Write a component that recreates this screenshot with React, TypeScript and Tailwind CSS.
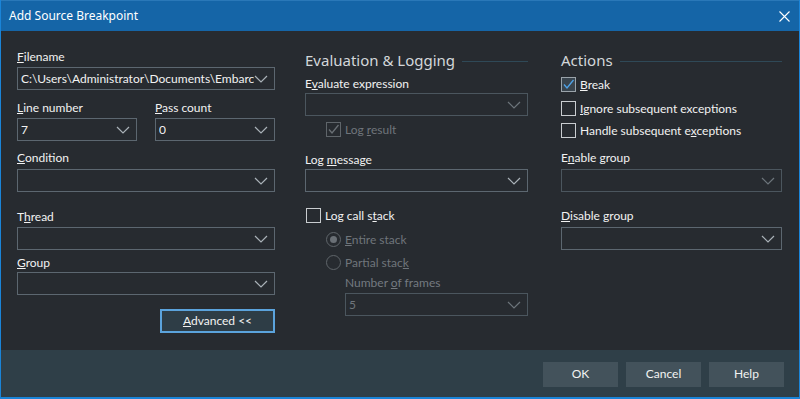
import type { ReactNode } from "react";

const font = "font-['Lato','Noto_Sans',sans-serif]";

const Chevron = ({ dim }: { dim?: boolean }) => (
  <svg width="14" height="8" viewBox="0 0 14 8" className="shrink-0">
    <path
      d="M1 1 L7 7 L13 1"
      fill="none"
      stroke={dim ? "#6d757b" : "#aab2b8"}
      strokeWidth="1.2"
    />
  </svg>
);

const Combo = ({
  value,
  disabled,
  className = "",
}: {
  value?: string;
  disabled?: boolean;
  className?: string;
}) => (
  <div
    className={`h-[23px] flex items-center justify-between pl-[3px] pr-[6px] border ${
      disabled ? "border-[#4b565e] text-[#6f767c]" : "border-[#5c6770] text-[#f2f2f2]"
    } ${className}`}
  >
    <span className="whitespace-nowrap overflow-hidden">{value}</span>
    <Chevron dim={disabled} />
  </div>
);

const Label = ({
  children,
  className = "",
  dim,
}: {
  children: ReactNode;
  className?: string;
  dim?: boolean;
}) => (
  <div
    className={`h-[16px] leading-[16px] whitespace-nowrap ${
      dim ? "text-[#747a80]" : "text-[#f2f2f2]"
    } ${className}`}
  >
    {children}
  </div>
);

const Check = ({
  checked,
  disabled,
  children,
  className = "",
}: {
  checked?: boolean;
  disabled?: boolean;
  children: ReactNode;
  className?: string;
}) => (
  <div className={`flex items-center h-[15px] ${className}`}>
    <div
      className={`w-[15px] h-[15px] border flex items-center justify-center ${
        disabled
          ? "border-[#5f656a]"
          : checked
          ? "border-[#9aa3aa] bg-[#39444d]"
          : "border-[#c9cdd0]"
      }`}
    >
      {checked && (
        <svg width="13" height="13" viewBox="0 0 13 13">
          <path
            d="M2 6.5 L5 10 L11.5 2"
            fill="none"
            stroke={disabled ? "#6a7075" : "#4fa3e8"}
            strokeWidth="1.3"
          />
        </svg>
      )}
    </div>
    <span
      className={`ml-[4px] leading-[16px] whitespace-nowrap ${
        disabled ? "text-[#6f757b]" : "text-[#f2f2f2]"
      }`}
    >
      {children}
    </span>
  </div>
);

const Radio = ({
  selected,
  children,
  className = "",
}: {
  selected?: boolean;
  children: ReactNode;
  className?: string;
}) => (
  <div className={`flex items-center h-[15px] ${className}`}>
    <div className="w-[15px] h-[15px] rounded-full border border-[#5f656a] flex items-center justify-center">
      {selected && <div className="w-[7px] h-[7px] rounded-full bg-[#6a7076]" />}
    </div>
    <span className="ml-[4px] leading-[16px] whitespace-nowrap text-[#6f757b]">
      {children}
    </span>
  </div>
);

const Heading = ({ children }: { children: ReactNode }) => (
  <div className="flex items-center h-[20px] mt-[19px]">
    <span className="font-['Noto_Sans',sans-serif] text-[15px] leading-[20px] text-[#d3d7da] whitespace-nowrap">
      {children}
    </span>
    <div className="flex-1 ml-[7px] h-px bg-[#2f4957] mt-[2px]" />
  </div>
);

const FooterButton = ({ children }: { children: ReactNode }) => (
  <div className="w-[75px] h-[25px] bg-[#43525b] text-[#f2f2f2] flex items-center justify-center">
    {children}
  </div>
);

export default function App() {
  return (
    <div
      className={`${font} text-[12px] w-[800px] h-[399px] bg-[#272b30] border-l border-r border-b-2 border-[#1a84d8] flex flex-col overflow-hidden`}
    >
      <div className="h-[31px] -mx-px bg-[#1565a7] border-t border-[#2a78b8] flex items-center justify-between pl-[9px] pr-[10px] text-white">
        <span className="font-['Noto_Sans',sans-serif] text-[12px]">Add Source Breakpoint</span>
        <svg width="11" height="11" viewBox="0 0 11 11">
          <path d="M0.5 0.5 L10.5 10.5 M10.5 0.5 L0.5 10.5" stroke="#ffffff" strokeWidth="1.1" />
        </svg>
      </div>

      <div className="flex-1 flex pl-[16px]">
        {/* left column */}
        <div className="w-[258px] flex flex-col">
          <Label className="mt-[18px]">
            <u>F</u>ilename
          </Label>
          <Combo
            className="mt-[2px]"
            value="C:\Users\Administrator\Documents\Embarcadero\Studio\Projects\Project1.dpr"
          />
          <div className="flex gap-[18px] mt-[10px]">
            <div className="w-[120px]">
              <Label>
                <u>L</u>ine number
              </Label>
              <Combo className="mt-[2px]" value="7" />
            </div>
            <div className="w-[120px]">
              <Label>
                <u>P</u>ass count
              </Label>
              <Combo className="mt-[2px]" value="0" />
            </div>
          </div>
          <Label className="mt-[9px]">
            <u>C</u>ondition
          </Label>
          <Combo className="mt-[3px]" />
          <Label className="mt-[17px]">
            T<u>h</u>read
          </Label>
          <Combo className="mt-[2px]" />
          <Label className="mt-[5px]">
            <u>G</u>roup
          </Label>
          <Combo className="mt-[1px]" />
          <div className="mt-[14px] self-end w-[115px] h-[24px] border-2 border-[#5ba3dc] bg-[#2e3d46] text-[#f2f2f2] flex items-center justify-center">
            <span>
              <u>A</u>dvanced &lt;&lt;
            </span>
          </div>
        </div>

        {/* middle column */}
        <div className="w-[223px] ml-[30px] flex flex-col">
          <Heading>Evaluation &amp; Logging</Heading>
          <Label className="mt-[6px]">
            E<u>v</u>aluate expression
          </Label>
          <Combo className="mt-[1px]" disabled />
          <Check className="mt-[6px] ml-[21px]" checked disabled>
            Log <u>r</u>esult
          </Check>
          <Label className="mt-[15px]">
            Log <u>m</u>essage
          </Label>
          <Combo className="mt-[1px]" />
          <Check className="mt-[16px] ml-px">
            Log call s<u>t</u>ack
          </Check>
          <Radio className="mt-[9px] ml-[21px]" selected>
            <u>E</u>ntire stack
          </Radio>
          <Radio className="mt-[8px] ml-[21px]">
            Partial stac<u>k</u>
          </Radio>
          <Label className="mt-[5px] ml-[40px]" dim>
            Number <u>o</u>f frames
          </Label>
          <Combo className="mt-[2px] ml-[40px]" value="5" disabled />
        </div>

        {/* right column */}
        <div className="w-[221px] ml-[33px] flex flex-col">
          <Heading>Actions</Heading>
          <Check className="mt-[7px]" checked>
            <u>B</u>reak
          </Check>
          <Check className="mt-[9px]">
            <u>I</u>gnore subsequent exceptions
          </Check>
          <Check className="mt-[7px]">
            Handle subsequent e<u>x</u>ceptions
          </Check>
          <Label className="mt-[12px]">
            E<u>n</u>able group
          </Label>
          <Combo className="mt-[3px]" disabled />
          <Label className="mt-[16px]">
            <u>D</u>isable group
          </Label>
          <Combo className="mt-[3px]" />
        </div>
      </div>

      <div className="h-[47px] bg-[#2f3f48] flex items-center justify-end gap-[8px] pr-[15px] pt-[1px]">
        <FooterButton>OK</FooterButton>
        <FooterButton>Cancel</FooterButton>
        <FooterButton>Help</FooterButton>
      </div>
    </div>
  );
}
